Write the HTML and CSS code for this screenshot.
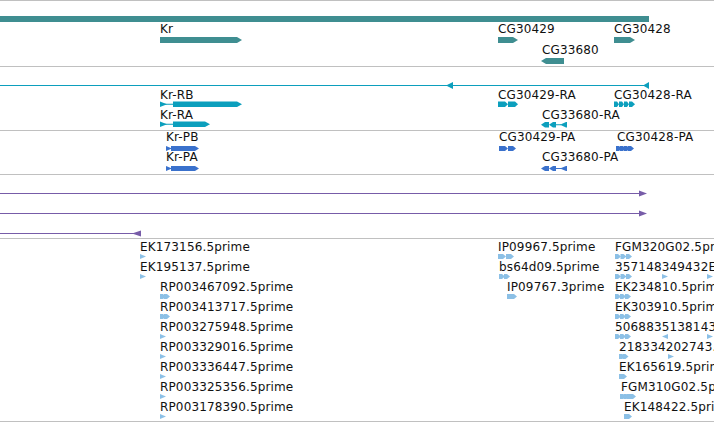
FILE: index.html
```html
<!DOCTYPE html>
<html>
<head>
<meta charset="utf-8">
<title>Tracks</title>
<link rel="stylesheet" href="styles.css">
</head>
<body>
<svg class="defs" width="0" height="0" aria-hidden="true">
  <defs>
    <polygon id="et" points="0,0 6,2.5 0,5"/>
    <polygon id="etl" points="6,0 0,2.5 6,5"/>
    <polygon id="ec" points="0,0 3,0 6,2.5 3,5 0,5"/>
    <polygon id="tc" points="0,0 3,0 5,2.75 3,5.5 0,5.5"/>
  </defs>
</svg>
<div class="tracks">
  <div class="track">
    <svg class="canvas" width="714" height="65" viewBox="0 1 714 65">
      <rect class="gene" x="0" y="16" width="649" height="6"/>
      <text x="160" y="33">Kr</text>
      <polygon class="gene" points="160,37 237,37 242,40 237,43 160,43"/>
      <text x="498" y="33">CG30429</text>
      <polygon class="gene" points="498,37 513,37 518,40 513,43 498,43"/>
      <text x="614" y="33">CG30428</text>
      <polygon class="gene" points="614,37 630,37 635,40 630,43 614,43"/>
      <text x="542" y="54">CG33680</text>
      <polygon class="gene" points="541,61 546,58 564,58 564,64 546,64"/>
    </svg>
  </div>
  <div class="track">
    <svg class="canvas" width="714" height="63" viewBox="0 67 714 63">
      <rect class="tx" x="0" y="85" width="649" height="1"/>
      <polygon class="tx" points="446,85.5 453,82 453,89"/>
      <polygon class="tx" points="643,85.5 649,82 649,89"/>
      <text x="160" y="99">Kr-RB</text>
      <polygon class="tx" points="160,101.5 167,104.25 160,107"/>
      <rect class="tx" x="160" y="103.75" width="14" height="1"/>
      <polygon class="tx" points="173,101.5 237,101.5 242,104.25 237,107 173,107"/>
      <text x="160" y="119">Kr-RA</text>
      <polygon class="tx" points="160,121.5 167,124.25 160,127"/>
      <rect class="tx" x="160" y="123.75" width="14" height="1"/>
      <polygon class="tx" points="173,121.5 205,121.5 210,124.25 205,127 173,127"/>
      <text x="498" y="99">CG30429-RA</text>
      <polygon class="tx" points="498,101.5 505,101.5 508,104.25 505,107 498,107"/>
      <polygon class="tx" points="508,101.5 515,101.5 518,104.25 515,107 508,107"/>
      <text x="614" y="99">CG30428-RA</text>
      <use class="tx" href="#tc" x="614" y="101.5"/>
      <use class="tx" href="#tc" x="619" y="101.5"/>
      <use class="tx" href="#tc" x="624" y="101.5"/>
      <polygon class="tx" points="629,101.5 632,101.5 635,104.25 632,107 629,107"/>
      <text x="542" y="119">CG33680-RA</text>
      <polygon class="tx" points="541,124.75 545,122 549,122 549,127.5 545,127.5"/>
      <polygon class="tx" points="549,124.75 553,122 556,122 556,127.5 553,127.5"/>
      <rect class="tx" x="555" y="124.25" width="6" height="1"/>
      <polygon class="tx" points="560,124.75 566,122 567,122 567,127.5 566,127.5"/>
    </svg>
  </div>
  <div class="track">
    <svg class="canvas" width="714" height="43" viewBox="0 131 714 43">
      <text x="166" y="141">Kr-PB</text>
      <polygon class="pr" points="166,146 172,148.5 166,151"/>
      <polygon class="pr" points="171,146 195,146 199,148.5 195,151 171,151"/>
      <text x="166" y="161">Kr-PA</text>
      <polygon class="pr" points="166,166 172,168.5 166,171"/>
      <polygon class="pr" points="171,166 195,166 199,168.5 195,171 171,171"/>
      <text x="499" y="141">CG30429-PA</text>
      <polygon class="pr" points="499,146 505,146 508,148.5 505,151 499,151"/>
      <polygon class="pr" points="508,146 513,146 516,148.5 513,151 508,151"/>
      <text x="617" y="141">CG30428-PA</text>
      <use class="pr" href="#ec" x="616" y="146"/>
      <use class="pr" href="#ec" x="620" y="146"/>
      <use class="pr" href="#ec" x="624" y="146"/>
      <polygon class="pr" points="628,146 631,146 634,148.5 631,151 628,151"/>
      <text x="542" y="161">CG33680-PA</text>
      <polygon class="pr" points="541,168.5 545,166 549,166 549,171 545,171"/>
      <polygon class="pr" points="549,168.5 553,166 556,166 556,171 553,171"/>
      <rect class="pr" x="555" y="168" width="6" height="1"/>
      <polygon class="pr" points="560,168.5 566,166 567,166 567,171 566,171"/>
    </svg>
  </div>
  <div class="track">
    <svg class="canvas" width="714" height="63" viewBox="0 175 714 63">
      <rect class="pu" x="0" y="193" width="640" height="1"/>
      <polygon class="pu" points="639,190.5 647,193.5 639,196.5"/>
      <rect class="pu" x="0" y="213" width="640" height="1"/>
      <polygon class="pu" points="639,210.5 647,213.5 639,216.5"/>
      <rect class="pu" x="0" y="233" width="134" height="1"/>
      <polygon class="pu" points="132,233.5 141,230.5 141,236.5"/>
    </svg>
  </div>
  <div class="track">
    <svg class="canvas" width="714" height="182" viewBox="0 239 714 182">
      <text x="140" y="251">EK173156.5prime</text>
      <use class="est" href="#et" x="140" y="254"/>
      <text x="140" y="271">EK195137.5prime</text>
      <use class="est" href="#et" x="140" y="274"/>
      <text x="160" y="291">RP003467092.5prime</text>
      <use class="est" href="#ec" x="160" y="294"/>
      <use class="est" href="#ec" x="164" y="294"/>
      <text x="160" y="311">RP003413717.5prime</text>
      <use class="est" href="#ec" x="160" y="314"/>
      <use class="est" href="#ec" x="164" y="314"/>
      <text x="160" y="331">RP003275948.5prime</text>
      <use class="est" href="#et" x="160" y="334"/>
      <text x="160" y="351">RP003329016.5prime</text>
      <use class="est" href="#et" x="160" y="354"/>
      <text x="160" y="371">RP003336447.5prime</text>
      <use class="est" href="#et" x="160" y="374"/>
      <text x="160" y="391">RP003325356.5prime</text>
      <use class="est" href="#et" x="160" y="394"/>
      <text x="160" y="411">RP003178390.5prime</text>
      <use class="est" href="#et" x="160" y="414"/>

      <text x="498" y="251">IP09967.5prime</text>
      <polygon class="est" points="498,254 503,254 506,256.5 503,259 498,259"/>
      <polygon class="est" points="506,254 511,254 514,256.5 511,259 506,259"/>
      <text x="499" y="271">bs64d09.5prime</text>
      <use class="est" href="#ec" x="499" y="274"/>
      <use class="est" href="#ec" x="504" y="274"/>
      <text x="507" y="291">IP09767.3prime</text>
      <polygon class="est" points="507,294 514,294 517,296.5 514,299 507,299"/>

      <text x="615" y="251">FGM320G02.5prime</text>
      <use class="est" href="#ec" x="615" y="254"/>
      <use class="est" href="#ec" x="620.5" y="254"/>
      <use class="est" href="#ec" x="626" y="254"/>
      <text x="615" y="271">357148349432EST.5prime</text>
      <use class="est" href="#ec" x="615" y="274"/>
      <use class="est" href="#ec" x="620.5" y="274"/>
      <use class="est" href="#ec" x="626" y="274"/>
      <use class="est" href="#et" x="662" y="274"/>
      <use class="est" href="#et" x="707" y="274"/>
      <text x="615" y="291">EK234810.5prime</text>
      <use class="est" href="#ec" x="615" y="294"/>
      <use class="est" href="#ec" x="620" y="294"/>
      <use class="est" href="#ec" x="625" y="294"/>
      <text x="615" y="311">EK303910.5prime</text>
      <use class="est" href="#ec" x="615" y="314"/>
      <use class="est" href="#ec" x="620" y="314"/>
      <use class="est" href="#ec" x="625" y="314"/>
      <text x="615" y="331">5068835138143.5prime</text>
      <use class="est" href="#ec" x="615" y="334"/>
      <use class="est" href="#ec" x="620" y="334"/>
      <use class="est" href="#ec" x="625" y="334"/>
      <use class="est" href="#etl" x="662" y="334"/>
      <use class="est" href="#et" x="707" y="334"/>
      <text x="619" y="351">218334202743.5prime</text>
      <use class="est" href="#ec" x="619" y="354"/>
      <use class="est" href="#ec" x="622.5" y="354"/>
      <use class="est" href="#et" x="668" y="354"/>
      <text x="619" y="371">EK165619.5prime</text>
      <use class="est" href="#ec" x="619" y="374"/>
      <use class="est" href="#ec" x="621" y="374"/>
      <text x="621" y="391">FGM310G02.5prime</text>
      <use class="est" href="#ec" x="620" y="394"/>
      <use class="est" href="#ec" x="623.5" y="394"/>
      <use class="est" href="#ec" x="627" y="394"/>
      <polygon class="est" points="628,394 633,394 636,396.5 633,399 628,399"/>
      <text x="624" y="411">EK148422.5prime</text>
      <polygon class="est" points="624,414 629,414 632,416.5 629,419 624,419"/>
    </svg>
  </div>
</div>
</body>
</html>
```

FILE: styles.css
```css
html, body {
  margin: 0;
  padding: 0;
  background: #ffffff;
  overflow: hidden;
}

body {
  width: 714px;
  height: 422px;
  font-family: "DejaVu Sans", "Liberation Sans", sans-serif;
  font-size: 12px;
}

.defs {
  position: absolute;
  width: 0;
  height: 0;
  overflow: hidden;
}

.tracks {
  display: flex;
  flex-direction: column;
  border-top: 1px solid #c0c0c0;
}

.track {
  border-bottom: 1px solid #c0c0c0;
}

.canvas {
  display: block;
  overflow: hidden;
}

.canvas text {
  font-family: "DejaVu Sans", "Liberation Sans", sans-serif;
  font-size: 12px;
  letter-spacing: 0.15px;
  fill: #111111;
}

.gene { fill: #3f8e91; }
.tx { fill: #0c9fbd; }
.pr { fill: #3a71cc; }
.pu { fill: #775ca8; }
.est { fill: #8cc0e6; }
```
